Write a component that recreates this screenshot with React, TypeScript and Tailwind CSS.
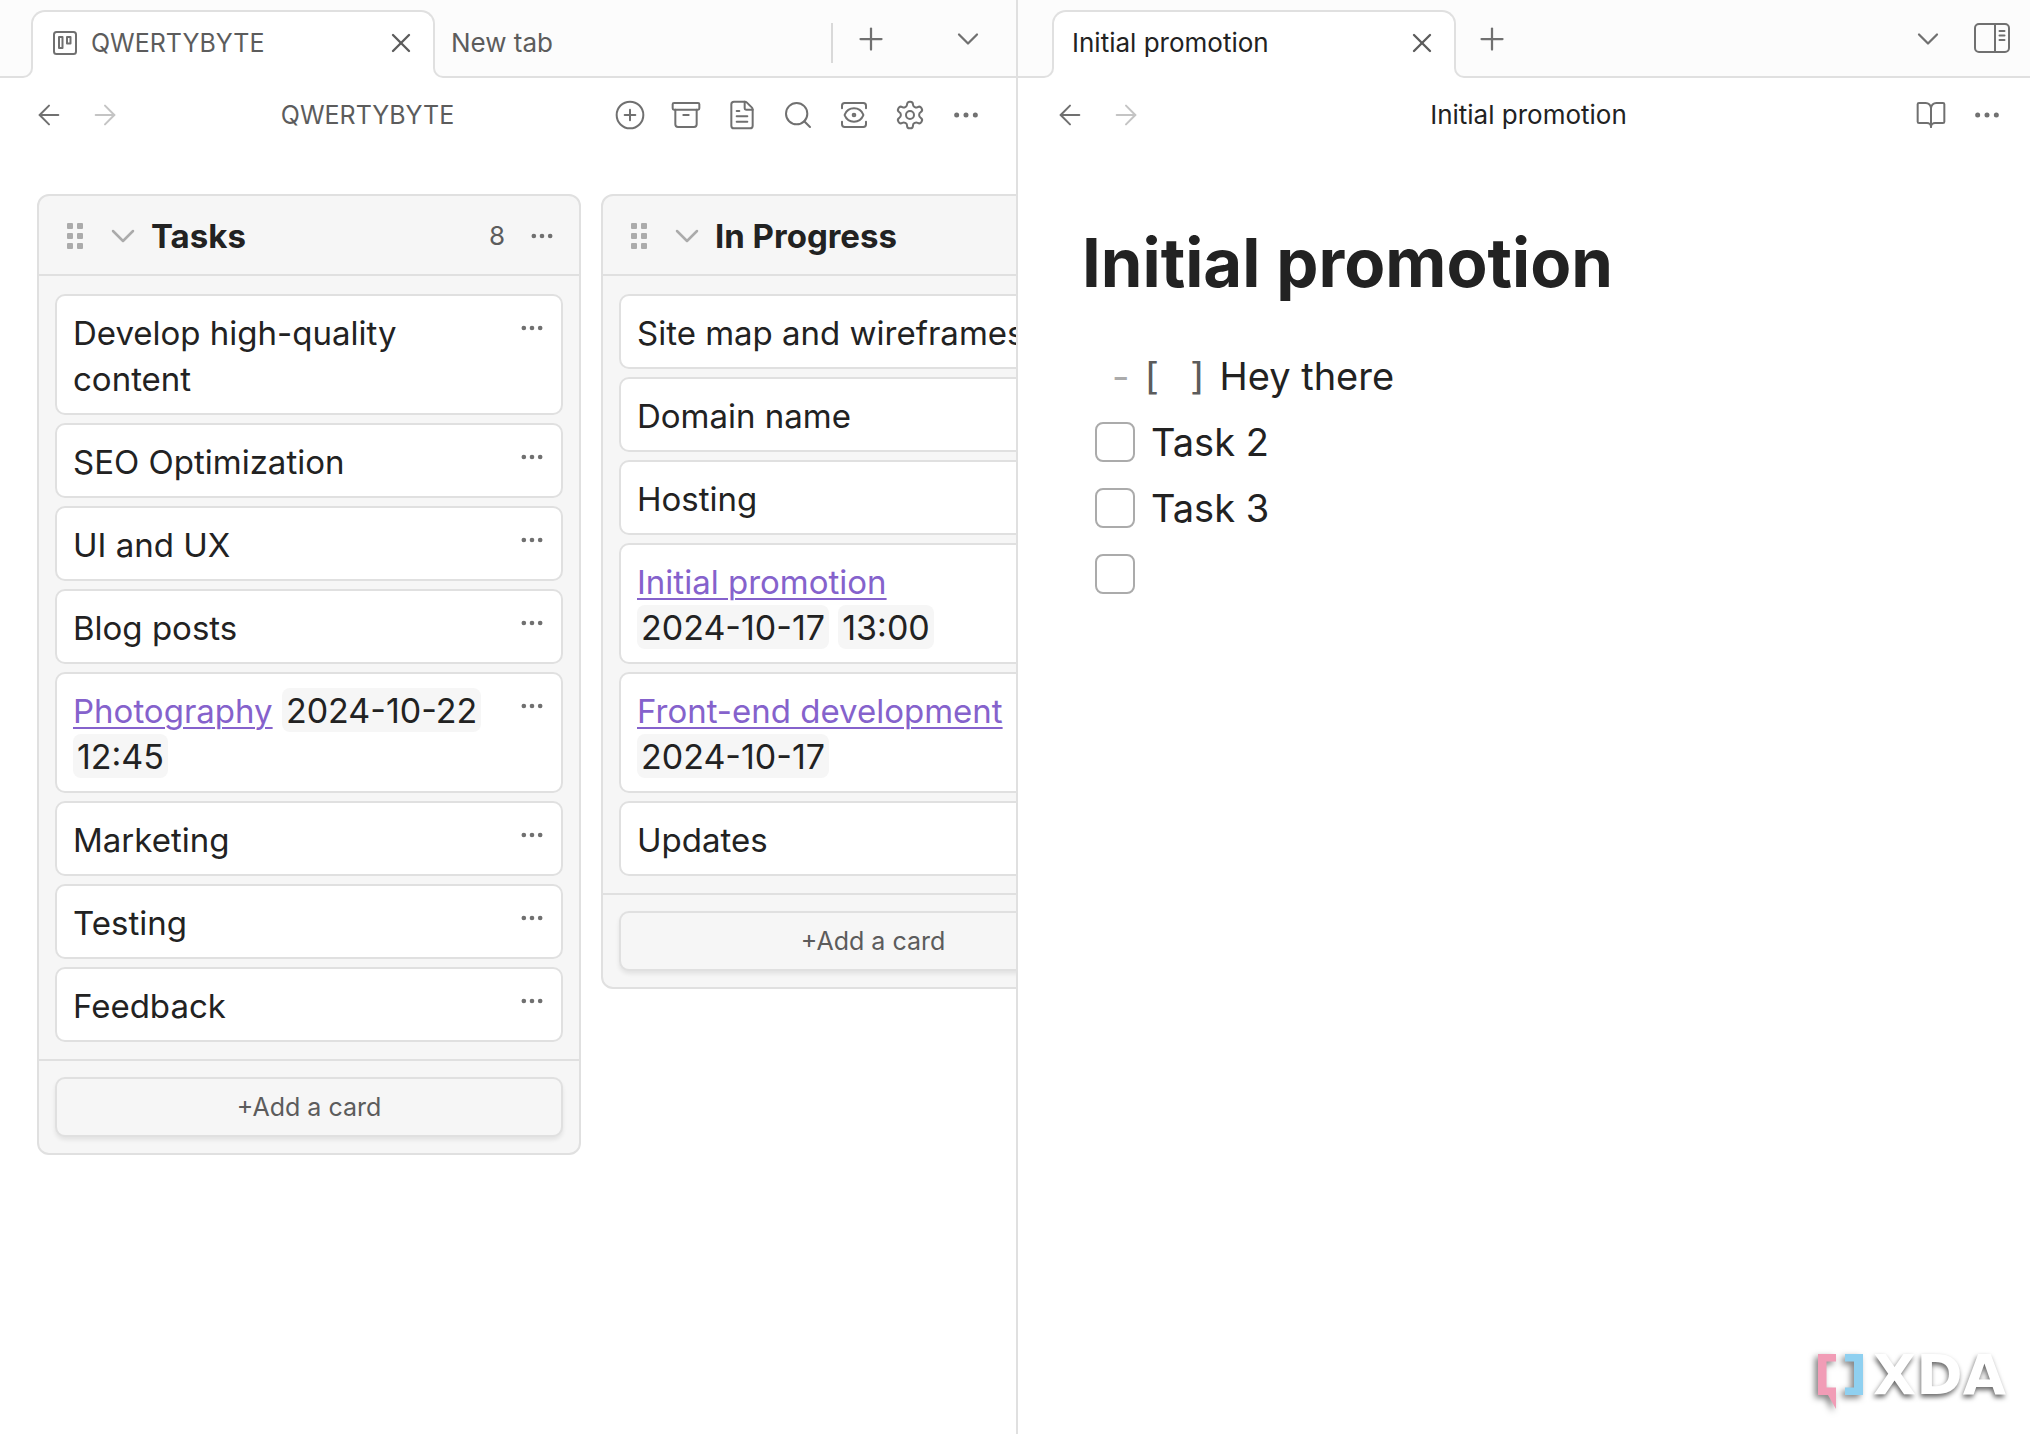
import { useState, type ReactNode } from 'react';
import {
  Archive,
  ArrowLeft,
  ArrowRight,
  BookOpen,
  ChevronDown,
  CirclePlus,
  FileText,
  MoreHorizontal,
  Plus,
  Search,
  View,
  X,
} from 'lucide-react';

type Card = { text?: string; link?: string; stamps?: string[] };

const tasks: Card[] = [
  { text: 'Develop high-quality content' },
  { text: 'SEO Optimization' },
  { text: 'UI and UX' },
  { text: 'Blog posts' },
  { link: 'Photography', stamps: ['2024-10-22', '12:45'] },
  { text: 'Marketing' },
  { text: 'Testing' },
  { text: 'Feedback' },
];

const inProgress: Card[] = [
  { text: 'Site map and wireframes' },
  { text: 'Domain name' },
  { text: 'Hosting' },
  { link: 'Initial promotion', stamps: ['2024-10-17', '13:00'] },
  { link: 'Front-end development', stamps: ['2024-10-17'] },
  { text: 'Updates' },
];

function IconButton({ label, className = '', children }: { label: string; className?: string; children: ReactNode }) {
  return (
    <button type="button" aria-label={label} className={`flex shrink-0 items-center justify-center ${className}`}>
      {children}
    </button>
  );
}

function BoardIcon() {
  return (
    <svg width="24" height="24" viewBox="0 0 24 24" fill="none" stroke="currentColor" strokeWidth="2" strokeLinecap="round" strokeLinejoin="round">
      <rect x="1" y="1" width="22" height="22" rx="2.500" />
      <rect x="6" y="6" width="3.500" height="11" />
      <rect x="14" y="6" width="3.500" height="6.500" />
    </svg>
  );
}

function GearIcon() {
  return (
    <svg width="32" height="32" viewBox="0 0 24 24" fill="none" stroke="currentColor" strokeWidth="1.5" strokeLinecap="round" strokeLinejoin="round">
      <path d="M12.22 2h-.44a2 2 0 0 0-2 2v.18a2 2 0 0 1-1 1.73l-.43.25a2 2 0 0 1-2 0l-.15-.08a2 2 0 0 0-2.73.73l-.22.38a2 2 0 0 0 .73 2.73l.15.1a2 2 0 0 1 1 1.72v.51a2 2 0 0 1-1 1.74l-.15.09a2 2 0 0 0-.73 2.73l.22.38a2 2 0 0 0 2.73.73l.15-.08a2 2 0 0 1 2 0l.43.25a2 2 0 0 1 1 1.73V20a2 2 0 0 0 2 2h.44a2 2 0 0 0 2-2v-.18a2 2 0 0 1 1-1.73l.43-.25a2 2 0 0 1 2 0l.15.08a2 2 0 0 0 2.73-.73l.22-.39a2 2 0 0 0-.73-2.73l-.15-.08a2 2 0 0 1-1-1.74v-.5a2 2 0 0 1 1-1.74l.15-.09a2 2 0 0 0 .73-2.73l-.22-.38a2 2 0 0 0-2.73-.73l-.15.08a2 2 0 0 1-2 0l-.43-.25a2 2 0 0 1-1-1.73V4a2 2 0 0 0-2-2z" />
      <circle cx="12" cy="12" r="3" />
    </svg>
  );
}

function SidebarIcon() {
  return (
    <svg width="36" height="30" viewBox="0 0 36 30" fill="none" stroke="currentColor" strokeWidth="2" strokeLinecap="round">
      <rect x="1" y="1" width="34" height="28" rx="4" />
      <path d="M21 1v28" />
      <path d="M25.500 8h5M25.500 12.500h5M25.500 17h5" />
    </svg>
  );
}

function GripIcon() {
  return (
    <svg width="17" height="27" viewBox="0 0 17 27" fill="currentColor">
      {[0, 10, 20].map((y) => (
        <g key={y}>
          <rect x="0" y={y} width="6" height="6" rx="1" />
          <rect x="10" y={y} width="6" height="6" rx="1" />
        </g>
      ))}
    </svg>
  );
}

/* The raised tab, with a small flare on each side where it meets the bar's lower line. */
function ActiveTab({ title, icon, className }: { title: string; icon?: ReactNode; className: string }) {
  return (
    <div className={`relative -mb-0.5 flex h-[68px] w-[404px] shrink-0 items-center rounded-t-[14px] border-2 border-b-0 border-[#e0e0e0] bg-white pr-4 pb-1 leading-8 ${className}`}>
      <span className="absolute right-full bottom-0 size-3 bg-white">
        <span className="block size-full rounded-br-[10px] border-r-2 border-b-2 border-[#e0e0e0] bg-[#fcfcfc]" />
      </span>
      <span className="absolute bottom-0 left-full size-3 bg-white">
        <span className="block size-full rounded-bl-[10px] border-b-2 border-l-2 border-[#e0e0e0] bg-[#fcfcfc]" />
      </span>
      {icon}
      <span className="flex-1 truncate">{title}</span>
      <IconButton label={`Close ${title}`} className="text-[#5c5c5c]">
        <X size={32} strokeWidth={1.75} />
      </IconButton>
    </div>
  );
}

function Stamp({ children }: { children: string }) {
  return (
    <span className="inline-block h-[44px] rounded-lg bg-[#f6f6f6] px-1 align-top text-[34px] leading-[46px] whitespace-nowrap">
      {children}
    </span>
  );
}

function CardItem({ card }: { card: Card }) {
  return (
    <li className="flex items-start rounded-[10px] border-2 border-[#e0e0e0] bg-white pt-[14px] pr-[15px] pb-[11px] pl-4">
      <p className="min-w-0 flex-1 text-[33px] leading-[46px] text-[#222222]">
        {card.text}
        {card.link && (
          <a href="#note" className="text-[#8562cc] underline decoration-2 underline-offset-4">
            {card.link}
          </a>
        )}
        {card.stamps?.map((s) => (
          <span key={s}>
            {' '}
            <Stamp>{s}</Stamp>
          </span>
        ))}
      </p>
      <IconButton label="Card options" className="mt-1 ml-4 text-[#707070]">
        <MoreHorizontal size={28} strokeWidth={2} />
      </IconButton>
    </li>
  );
}

function Lane({ title, cards }: { title: string; cards: Card[] }) {
  return (
    <section className="w-[544px] shrink-0 rounded-xl border-2 border-[#e0e0e0] bg-[#f6f6f6]">
      <header className="flex h-20 items-center border-b-2 border-[#e0e0e0] pt-0.5 pr-[23px] pl-7 text-[#ababab]">
        <GripIcon />
        <IconButton label={`Collapse ${title}`} className="ml-[19px]">
          <ChevronDown size={40} strokeWidth={1.5} />
        </IconButton>
        <h2 className="ml-2 flex-1 text-[33px] leading-[46px] font-bold text-[#222222]">{title}</h2>
        <span className="text-[26px] leading-8 text-[#5c5c5c]">{cards.length}</span>
        <IconButton label={`${title} options`} className="ml-[23px] text-[#707070]">
          <MoreHorizontal size={28} strokeWidth={2} />
        </IconButton>
      </header>
      <ul className="flex flex-col gap-2 px-4 pt-[18px] pb-[17px]">
        {cards.map((c) => (
          <CardItem key={c.text ?? c.link} card={c} />
        ))}
      </ul>
      <footer className="border-t-2 border-[#e0e0e0] p-4">
        <button type="button" className="h-[60px] w-full rounded-[10px] border-2 border-[#e0e0e0] bg-[#f6f6f6] text-[25px] leading-8 text-[#5c5c5c] shadow-[0_3px_4px_rgba(0,0,0,0.08)]">
          +Add a card
        </button>
      </footer>
    </section>
  );
}

function NavArrows() {
  return (
    <div className="mr-3 flex gap-6">
      <IconButton label="Back" className="text-[#707070]">
        <ArrowLeft size={32} strokeWidth={1.5} />
      </IconButton>
      <IconButton label="Forward" className="text-[#c4c4c4]">
        <ArrowRight size={32} strokeWidth={1.5} />
      </IconButton>
    </div>
  );
}

function BoardPane() {
  return (
    <section className="min-w-0 overflow-hidden border-r-2 border-[#e0e0e0]">
      <div className="flex h-[78px] items-end border-b-2 border-[#e0e0e0] bg-[#fcfcfc] pr-[30px]">
        <ActiveTab
          title="QWERTYBYTE"
          className="ml-[31px] pl-5 text-[25px] text-[#5c5c5c]"
          icon={
            <span className="mr-[14px] text-[#707070]">
              <BoardIcon />
            </span>
          }
        />
        <button type="button" className="mb-[13px] h-10 flex-1 border-r-2 border-[#d9d9d9] pl-4 text-left text-[26px] leading-8 text-[#5c5c5c]">
          New tab
        </button>
        <IconButton label="New tab" className="mb-[19px] ml-5 text-[#707070]">
          <Plus size={36} strokeWidth={1.5} />
        </IconButton>
        <IconButton label="Tab list" className="mb-[19px] ml-[61px] text-[#707070]">
          <ChevronDown size={36} strokeWidth={1.5} />
        </IconButton>
      </div>
      <div className="flex h-[74px] items-center pr-[22px] pl-[33px]">
        <NavArrows />
        <h1 className="flex-1 text-center text-[25px] leading-8 text-[#5c5c5c]">QWERTYBYTE</h1>
        <div className="flex text-[#707070]">
          <IconButton label="Add a list" className="w-14"><CirclePlus size={32} strokeWidth={1.5} /></IconButton>
          <IconButton label="Archive completed cards" className="w-14"><Archive size={32} strokeWidth={1.5} /></IconButton>
          <IconButton label="Open as markdown" className="w-14"><FileText size={32} strokeWidth={1.5} /></IconButton>
          <IconButton label="Search" className="w-14"><Search size={32} strokeWidth={1.5} /></IconButton>
          <IconButton label="Board view" className="w-14"><View size={32} strokeWidth={1.5} /></IconButton>
          <IconButton label="Board settings" className="w-14"><GearIcon /></IconButton>
          <IconButton label="More options" className="w-14"><MoreHorizontal size={32} strokeWidth={1.75} /></IconButton>
        </div>
      </div>
      <div className="flex items-start gap-5 pt-[42px] pl-[37px]">
        <Lane title="Tasks" cards={tasks} />
        <Lane title="In Progress" cards={inProgress} />
      </div>
    </section>
  );
}

function TaskRow({ label }: { label: string }) {
  const [done, setDone] = useState(false);
  return (
    <label className="flex h-[66px] items-center gap-4 pl-[13px]">
      <input
        type="checkbox"
        aria-label={label || 'Empty task'}
        checked={done}
        onChange={() => setDone(!done)}
        className="size-10 appearance-none rounded-lg border-2 border-[#ababab] bg-white checked:bg-[#8562cc]"
      />
      {label}
    </label>
  );
}

function NotePane() {
  return (
    <section className="relative min-w-0">
      <div className="flex h-[78px] items-end border-b-2 border-[#e0e0e0] bg-[#fcfcfc] pr-5">
        <ActiveTab title="Initial promotion" className="ml-[34px] pl-[18px] text-[26px]" />
        <IconButton label="New tab" className="mb-[19px] ml-[18px] text-[#707070]">
          <Plus size={36} strokeWidth={1.5} />
        </IconButton>
        <IconButton label="Tab list" className="mb-[19px] ml-auto text-[#707070]">
          <ChevronDown size={36} strokeWidth={1.5} />
        </IconButton>
        <IconButton label="Toggle right sidebar" className="mb-[23px] ml-7 text-[#707070]">
          <SidebarIcon />
        </IconButton>
      </div>
      <div className="flex h-[74px] items-center pr-[15px] pl-9">
        <NavArrows />
        <span className="flex-1 text-center text-[26px] leading-8">Initial promotion</span>
        <div className="flex text-[#707070]">
          <IconButton label="Reading view" className="w-14"><BookOpen size={32} strokeWidth={1.5} /></IconButton>
          <IconButton label="More options" className="w-14"><MoreHorizontal size={32} strokeWidth={1.75} /></IconButton>
        </div>
      </div>
      <article className="px-16 pt-[67px] text-[38px] leading-[66px]">
        <h1 className="text-[67px] leading-[88px] font-bold">Initial promotion</h1>
        <div className="mt-9">
          <p className="flex h-[66px] items-center pl-[30px] whitespace-pre">
            <span className="text-[#ababab]">- </span>
            <span className="font-['DejaVu_Sans_Mono',monospace] text-[38px] text-[#5c5c5c]">[ ]</span>
            <span> Hey there</span>
          </p>
          <TaskRow label="Task 2" />
          <TaskRow label="Task 3" />
          <TaskRow label="" />
        </div>
      </article>
      <div className="absolute right-6 bottom-[22px] flex items-start gap-[9px]" role="img" aria-label="XDA">
        <svg width="46" height="58" viewBox="0 0 46 58" className="overflow-visible drop-shadow-[-3px_3px_3px_rgba(0,0,0,0.5)]">
          <path fill="#f19cb6" d="M0 0h18v7.500h-9.500v26H18V55L10 41H0z" />
          <path fill="#8fd0f0" d="M27 0h18v41H27v-7.500h9V7.500h-9z" />
        </svg>
        <span className="font-['DejaVu_Sans',sans-serif] text-[56px] leading-[41px] font-bold text-white [text-shadow:-1px_3px_5px_rgba(0,0,0,0.6)]">XDA</span>
      </div>
    </section>
  );
}

export default function App() {
  return (
    <main className="grid min-h-screen grid-cols-[minmax(0,1018fr)_minmax(0,1012fr)] bg-white font-[Inter,'Liberation_Sans',sans-serif] text-[#222222]">
      <BoardPane />
      <NotePane />
    </main>
  );
}
